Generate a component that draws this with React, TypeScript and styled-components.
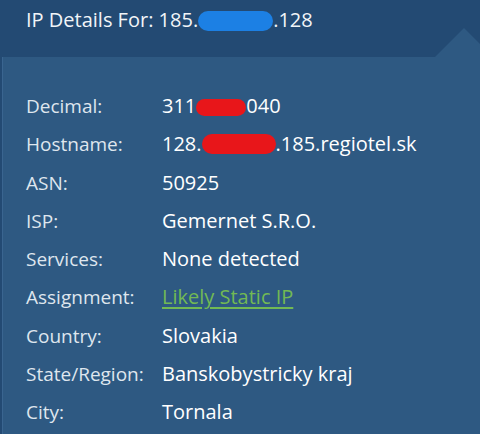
import styled, { createGlobalStyle } from 'styled-components';

const GlobalStyle = createGlobalStyle`
  html, body {
    margin: 0;
    padding: 0;
    background: #234a73;
  }
  body {
    font-family: "Open Sans", "Liberation Sans", sans-serif;
  }
`;

const Page = styled.div`
  width: 480px;
  height: 434px;
  overflow: hidden;
  display: flex;
  flex-direction: column;
  background: #234a73;
`;

const Header = styled.div`
  height: 57px;
  padding: 0 0 0 26px;
  display: flex;
  align-items: flex-start;
`;

const Title = styled.h1`
  margin: 0;
  padding-top: 6px;
  font-size: 20px;
  font-weight: 400;
  line-height: 28px;
  color: #f2f5f8;
  white-space: nowrap;
`;

const Panel = styled.div`
  position: relative;
  flex: 1;
  margin-left: 2px;
  border-left: 1px solid #3a6590;
  background: #2e5982;
  padding: 30px 0 0 23px;

  &::before {
    content: '';
    position: absolute;
    top: -29px;
    right: -13px;
    width: 0;
    height: 0;
    border-left: 29px solid transparent;
    border-right: 29px solid transparent;
    border-bottom: 29px solid #2e5982;
  }
`;

const Rows = styled.dl`
  margin: 0;
  display: grid;
  grid-template-columns: 136px 1fr;
  grid-auto-rows: 38.25px;
  align-items: center;
`;

const Label = styled.dt`
  font-size: 19px;
  line-height: 38.25px;
  color: #dfe6ee;
  font-weight: 400;
`;

const Value = styled.dd`
  margin: 0;
  font-size: 20px;
  line-height: 38.25px;
  color: #ffffff;
  font-weight: 500;
  white-space: nowrap;
`;

const Link = styled.a`
  color: #72b954;
  font-weight: 400;
  text-decoration: underline;
  text-underline-offset: 3px;
`;

const Scribble = styled.span<{ $tone: 'red' | 'blue'; $w: number; $h: number }>`
  display: inline-block;
  width: ${({ $w }) => $w}px;
  height: ${({ $h }) => $h}px;
  vertical-align: ${({ $tone }) => ($tone === 'blue' ? '-4px' : '-3px')};
  border-radius: 10px;
  background: ${({ $tone }) => ($tone === 'blue' ? '#1c80e4' : '#e8161a')};
`;

const details: { label: string; value: React.ReactNode }[] = [
  {
    label: 'Decimal:',
    value: (
      <>
        311<Scribble $tone="red" $w={50} $h={17} />040
      </>
    ),
  },
  {
    label: 'Hostname:',
    value: (
      <>
        128.<Scribble $tone="red" $w={74} $h={20} />.185.regiotel.sk
      </>
    ),
  },
  { label: 'ASN:', value: '50925' },
  { label: 'ISP:', value: 'Gemernet S.R.O.' },
  { label: 'Services:', value: 'None detected' },
  { label: 'Assignment:', value: <Link href="#">Likely Static IP</Link> },
  { label: 'Country:', value: 'Slovakia' },
  { label: 'State/Region:', value: 'Banskobystricky kraj' },
  { label: 'City:', value: 'Tornala' },
];

const App = () => (
  <Page>
    <GlobalStyle />
    <Header>
      <Title>
        IP Details For: 185.<Scribble $tone="blue" $w={75} $h={20} />.128
      </Title>
    </Header>
    <Panel>
      <Rows>
        {details.map(({ label, value }) => (
          <>
            <Label key={`l-${label}`}>{label}</Label>
            <Value key={`v-${label}`}>{value}</Value>
          </>
        ))}
      </Rows>
    </Panel>
  </Page>
);

export default App;
